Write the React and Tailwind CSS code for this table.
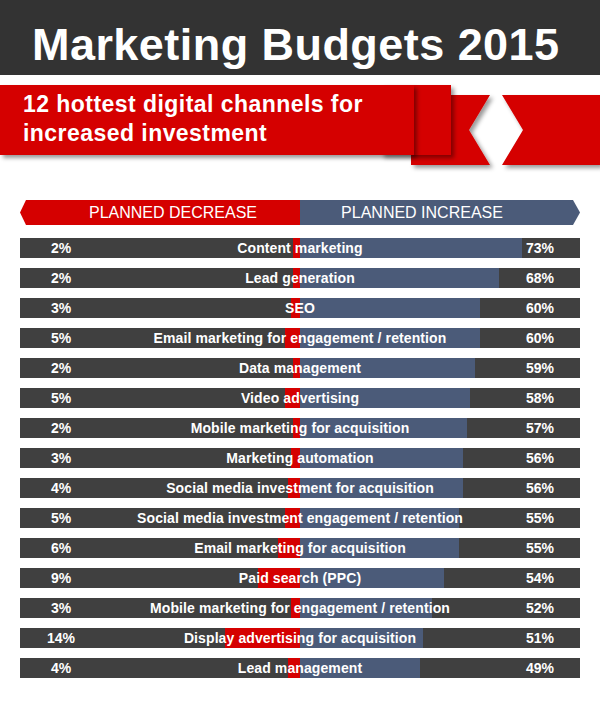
import React from 'react';

const rows = [
  { label: 'Content marketing', down: 2, up: 73, red: 7, blue: 222 },
  { label: 'Lead generation', down: 2, up: 68, red: 7, blue: 199 },
  { label: 'SEO', down: 3, up: 60, red: 9, blue: 180 },
  { label: 'Email marketing for engagement / retention', down: 5, up: 60, red: 15, blue: 180 },
  { label: 'Data management', down: 2, up: 59, red: 7, blue: 175 },
  { label: 'Video advertising', down: 5, up: 58, red: 15, blue: 170 },
  { label: 'Mobile marketing for acquisition', down: 2, up: 57, red: 7, blue: 167 },
  { label: 'Marketing automation', down: 3, up: 56, red: 9, blue: 163 },
  { label: 'Social media investment for acquisition', down: 4, up: 56, red: 12, blue: 163 },
  { label: 'Social media investment engagement / retention', down: 5, up: 55, red: 15, blue: 159 },
  { label: 'Email marketing for acquisition', down: 6, up: 55, red: 22, blue: 159 },
  { label: 'Paid search (PPC)', down: 9, up: 54, red: 42, blue: 144 },
  { label: 'Mobile marketing for engagement / retention', down: 3, up: 52, red: 9, blue: 132 },
  { label: 'Display advertising for acquisition', down: 14, up: 51, red: 75, blue: 123 },
  { label: 'Lead management', down: 4, up: 49, red: 12, blue: 120 },
];

function Ribbon() {
  // decorative folded ribbon pieces behind the main banner
  return (
    <svg className="absolute left-0 top-0" width="600" height="110" viewBox="0 85 600 110">
      <defs>
        <filter id="sh" x="-20%" y="-20%" width="140%" height="150%">
          <feDropShadow dx="3" dy="3" stdDeviation="2" floodColor="#000" floodOpacity="0.4" />
        </filter>
      </defs>
      <polygon points="502,105 600,105 600,175 502,175 523,140" fill="#d50000" filter="url(#sh)" />
      <polygon points="411,105 490,105 469,140 490,175 411,175" fill="#d50000" filter="url(#sh)" />
      <rect x="381" y="95" width="70" height="70" fill="#d50000" filter="url(#sh)" />
    </svg>
  );
}

export default function App() {
  return (
    <div className="w-[600px] h-[706px] bg-white font-['Liberation_Sans',Arial,sans-serif] text-white">
      {/* Title */}
      <div className="h-[75px] bg-[#333333] pl-[32px] pt-[22px]">
        <h1 className="text-[45px] leading-[45px] font-bold tracking-[0.45px]">Marketing Budgets 2015</h1>
      </div>

      {/* Banner */}
      <div className="relative h-[125px] pt-[10px]">
        <Ribbon />
        <div className="relative w-[414px] h-[70px] bg-[#d50000] pl-[23px] pt-[5px] shadow-[3px_3px_4px_rgba(0,0,0,0.4)]">
          <p className="text-[23px] leading-[29px] font-bold tracking-[0.45px]">
            12 hottest digital channels for
            <br />
            increased investment
          </p>
        </div>
      </div>

      {/* Legend */}
      <div className="mx-[20px] flex h-[25px] text-[16px]">
        <div className="w-[280px] bg-[#d50000] pl-[26px] flex items-center justify-center [clip-path:polygon(6px_0,100%_0,100%_100%,6px_100%,0_50%)]">
          PLANNED DECREASE
        </div>
        <div className="w-[280px] bg-[#4b5b79] pr-[36px] flex items-center justify-center [clip-path:polygon(0_0,calc(100%-7px)_0,100%_50%,calc(100%-7px)_100%,0_100%)]">
          PLANNED INCREASE
        </div>
      </div>

      {/* Chart */}
      <div className="mx-[20px] mt-[13px] flex flex-col gap-[10px]">
        {rows.map((r) => (
          <div key={r.label} className="relative flex h-[20px] bg-[#404040] text-[14px] font-bold">
            <div className="w-[280px] flex justify-end">
              <div className="h-full bg-[#d50000]" style={{ width: r.red }} />
            </div>
            <div className="w-[280px] flex">
              <div className="h-full bg-[#4b5b79]" style={{ width: r.blue }} />
            </div>
            <span className="absolute left-0 top-0 h-full w-[82px] flex items-center justify-center">{r.down}%</span>
            <span className="absolute inset-0 flex items-center justify-center whitespace-nowrap tracking-[0.1px]">{r.label}</span>
            <span className="absolute right-0 top-0 h-full w-[80px] flex items-center justify-center">{r.up}%</span>
          </div>
        ))}
      </div>
    </div>
  );
}
